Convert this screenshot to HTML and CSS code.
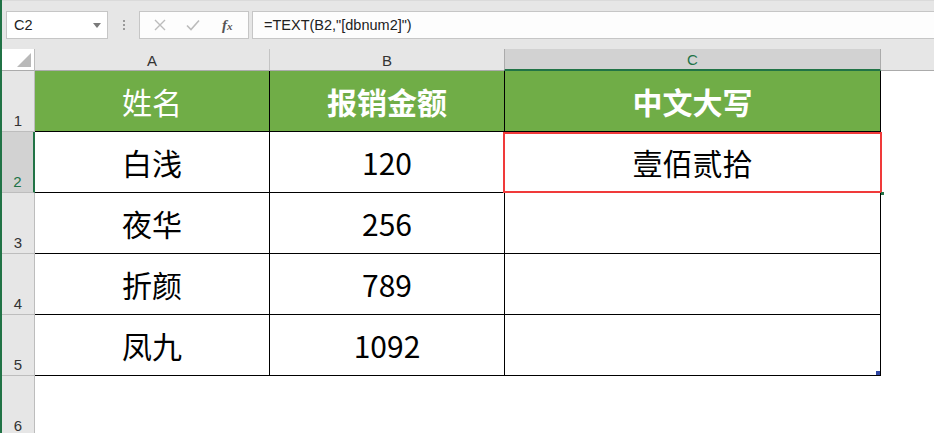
FILE: index.html
```html
<!DOCTYPE html>
<html lang="zh-CN">

<head>
    <meta charset="UTF-8">
    <meta name="viewport" content="width=device-width, initial-scale=1.0">
    <title>TEXT dbnum2</title>
    <link rel="stylesheet" href="styles.css">
</head>

<body>
    <div class="app">
        <div class="topstrip"></div>

        <div class="formulabar">
            <div class="namebox">
                <span>C2</span>
                <svg class="caret" width="8" height="5" viewBox="0 0 8 5"><path d="M0 0h8L4 5z" fill="#7a7a7a"/></svg>
            </div>
            <div class="dots"><i></i><i></i><i></i></div>
            <div class="fxbox">
                <svg width="12" height="12" viewBox="0 0 12 12"><path d="M1 1l10 10M11 1L1 11" stroke="#bcbcbc" stroke-width="1.4" fill="none"/></svg>
                <svg width="14" height="12" viewBox="0 0 14 12"><path d="M1 6.5l4 4L13 1.5" stroke="#bcbcbc" stroke-width="1.6" fill="none"/></svg>
                <span class="fx">f<sub>x</sub></span>
            </div>
            <div class="formula">=TEXT(B2,"[dbnum2]")</div>
        </div>

        <div class="sheet">
            <!-- column headers -->
            <div class="corner"><span class="tri"></span></div>
            <div class="colhead">A</div>
            <div class="colhead">B</div>
            <div class="colhead sel">C</div>
            <div class="colhead rest"></div>

            <!-- row 1 -->
            <div class="rowhead">1</div>
            <div class="cell head">姓名</div>
            <div class="cell head bold">报销金额</div>
            <div class="cell head bold">中文大写</div>
            <div class="blank"></div>

            <!-- row 2 -->
            <div class="rowhead sel">2</div>
            <div class="cell">白浅</div>
            <div class="cell">120</div>
            <div class="cell active">壹佰贰拾<span class="mark"></span><span class="knob"></span></div>
            <div class="blank"></div>

            <!-- row 3 -->
            <div class="rowhead">3</div>
            <div class="cell">夜华</div>
            <div class="cell">256</div>
            <div class="cell"></div>
            <div class="blank"></div>

            <!-- row 4 -->
            <div class="rowhead">4</div>
            <div class="cell">折颜</div>
            <div class="cell">789</div>
            <div class="cell"></div>
            <div class="blank"></div>

            <!-- row 5 -->
            <div class="rowhead">5</div>
            <div class="cell">凤九</div>
            <div class="cell">1092</div>
            <div class="cell last"><span class="fill"></span></div>
            <div class="blank"></div>

            <!-- row 6 -->
            <div class="rowhead">6</div>
            <div class="blank"></div>
            <div class="blank"></div>
            <div class="blank"></div>
            <div class="blank"></div>
        </div>
    </div>
</body>

</html>
```

FILE: styles.css
```css
* {
    margin: 0;
    padding: 0;
    box-sizing: border-box;
}

body {
    background: #fff;
    font-family: "Liberation Sans", Arial, sans-serif;
    overflow: hidden;
}

.app {
    width: 934px;
    height: 433px;
    border-left: 2px solid #217346;
    background: #e6e6e6;
    overflow: hidden;
}

.topstrip {
    height: 11px;
    border-top: 1px solid #dadada;
}

.formulabar {
    display: flex;
    height: 38px;
    padding-bottom: 10px;
}

.namebox {
    display: flex;
    align-items: center;
    justify-content: space-between;
    width: 102px;
    margin-left: 4px;
    padding: 0 6px 0 7px;
    background: #fff;
    border: 1px solid #c6c6c6;
    font-size: 14.5px;
    color: #222;
}

.dots {
    display: flex;
    flex-direction: column;
    justify-content: center;
    gap: 2px;
    width: 31px;
    padding-left: 15px;
}

.dots i {
    display: block;
    width: 2px;
    height: 2px;
    background: #9a9a9a;
}

.fxbox {
    display: flex;
    align-items: center;
    width: 110px;
    padding-left: 14px;
    gap: 20px;
    background: #fdfdfd;
    border: 1px solid #c6c6c6;
}

.fx {
    font-family: "Liberation Serif", serif;
    font-style: italic;
    font-weight: 700;
    font-size: 15px;
    color: #555;
    margin-left: 2px;
}

.fx sub {
    font-size: 11px;
    vertical-align: 0;
}

.formula {
    flex: 1;
    margin-left: 3px;
    padding-left: 11px;
    line-height: 26px;
    background: #fdfdfd;
    border: 1px solid #c6c6c6;
    border-right: none;
    font-size: 14.5px;
    color: #222;
}

.sheet {
    display: grid;
    grid-template-columns: 33px 235px 235px 376px 1fr;
    grid-template-rows: 22px repeat(5, 61px) 61px;
    background: #fff;
}

.corner {
    position: relative;
    border-right: 1px solid #bdbdbd;
    border-bottom: 1px solid #ababab;
}

.corner .tri {
    position: absolute;
    right: 3px;
    bottom: 3px;
    width: 0;
    height: 0;
    border-left: 14px solid transparent;
    border-bottom: 14px solid #b9b9b9;
}

.colhead {
    display: flex;
    align-items: center;
    justify-content: center;
    background: #e6e6e6;
    border-right: 1px solid #c4c4c4;
    border-bottom: 1px solid #ababab;
    font-size: 15px;
    color: #333;
    padding-top: 1px;
}

.colhead.sel {
    background: #d2d2d2;
    border-left: 1px solid #ababab;
    border-right: 1px solid #ababab;
    border-bottom: 2px solid #217346;
    margin-left: -1px;
    color: #217346;
}

.colhead.rest {
    border-right: none;
}

.rowhead {
    display: flex;
    align-items: flex-end;
    justify-content: center;
    padding-bottom: 2px;
    background: #e6e6e6;
    border-right: 1px solid #bdbdbd;
    border-bottom: 1px solid #bdbdbd;
    font-size: 15px;
    color: #333;
}

.rowhead.sel {
    background: #d2d2d2;
    border-right: 2px solid #217346;
    color: #217346;
}

.cell {
    position: relative;
    display: flex;
    align-items: center;
    justify-content: center;
    border-right: 1px solid #000;
    border-bottom: 1px solid #000;
    font-family: "Noto Sans CJK SC", "Noto Sans", sans-serif;
    font-size: 30px;
    color: #000;
}

.cell.head {
    background: #70ad47;
    color: #fff;
}

.cell.bold {
    font-weight: 700;
}

.cell .mark {
    position: absolute;
    left: -2px;
    top: 0;
    right: -2px;
    bottom: -1px;
    border: 2px solid #f03a3a;
}

.cell .knob {
    position: absolute;
    right: -4px;
    bottom: -3px;
    width: 3px;
    height: 3px;
    background: #217346;
}

.cell .fill {
    position: absolute;
    right: 0;
    bottom: 0;
    width: 4px;
    height: 4px;
    background: #2f46a3;
}

.blank {
    background: #fff;
}
```
